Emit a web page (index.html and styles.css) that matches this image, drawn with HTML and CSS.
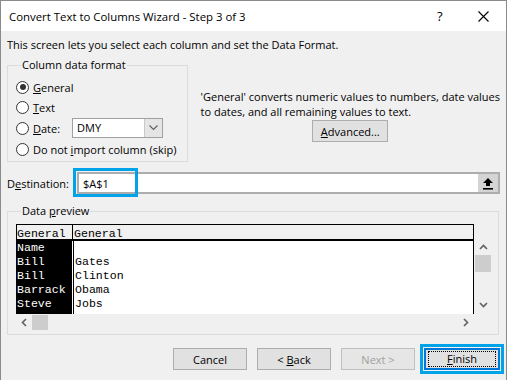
FILE: index.html
```html
<!DOCTYPE html>
<html lang="en">
<head>
  <meta charset="UTF-8">
  <title>Convert Text to Columns Wizard - Step 3 of 3</title>
  <link rel="stylesheet" href="styles.css">
</head>
<body>

<div class="window">
  <!-- Title bar -->
  <div class="titlebar">
    <span class="title">Convert Text to Columns Wizard - Step 3 of 3</span>
    <span class="help">?</span>
    <span class="close">
      <svg width="11" height="11" viewBox="0 0 11 11"><path d="M0.5 0.5 L10.5 10.5 M10.5 0.5 L0.5 10.5" stroke="#000" stroke-width="1.1" fill="none"/></svg>
    </span>
  </div>

  <div class="content">
    <p class="intro">This screen lets you select each column and set the Data Format.</p>

    <div class="format-row">
      <fieldset class="group format">
        <legend>Column data format</legend>
        <div class="radio checked"><span class="dot"></span><span><u>G</u>eneral</span></div>
        <div class="radio"><span class="dot"></span><span><u>T</u>ext</span></div>
        <div class="radio date">
          <span class="dot"></span><span class="date-label"><u>D</u>ate:</span>
          <div class="combo">
            <span class="combo-value">DMY</span>
            <span class="combo-btn">
              <svg width="9" height="6" viewBox="0 0 9 6"><path d="M0.5 0.5 L4.5 4.5 L8.5 0.5" stroke="#606060" stroke-width="1.2" fill="none"/></svg>
            </span>
          </div>
        </div>
        <div class="radio skip"><span class="dot"></span><span>Do not <u>i</u>mport column (skip)</span></div>
      </fieldset>

      <div class="format-help">
        <p>'General' converts numeric values to numbers, date values<br>to dates, and all remaining values to text.</p>
        <button class="btn advanced"><u>A</u>dvanced...</button>
      </div>
    </div>

    <div class="dest-row">
      <span class="dest-label">D<u>e</u>stination:</span>
      <div class="dest-input">
        <span class="dest-value">$A$1</span>
        <span class="pick-btn">
          <svg width="12" height="13" viewBox="0 0 12 13"><path d="M6 1 L11 6 L8 6 L8 9 L4 9 L4 6 L1 6 Z" fill="#000"/><rect x="1" y="11" width="10" height="1.6" fill="#000"/></svg>
        </span>
        <span class="mark mark-dest"></span>
      </div>
    </div>

    <fieldset class="group preview">
      <legend>Data <u>p</u>review</legend>
      <div class="preview-main">
        <div class="grid">
          <div class="grid-head">
            <span class="c1">General</span><span class="c2">General</span>
          </div>
          <div class="grid-body">
            <div class="grid-row"><span class="c1">Name</span><span class="c2"></span></div>
            <div class="grid-row"><span class="c1">Bill</span><span class="c2">Gates</span></div>
            <div class="grid-row"><span class="c1">Bill</span><span class="c2">Clinton</span></div>
            <div class="grid-row"><span class="c1">Barrack</span><span class="c2">Obama</span></div>
            <div class="grid-row"><span class="c1">Steve</span><span class="c2">Jobs</span></div>
          </div>
        </div>
        <div class="vscroll">
          <svg class="arr" width="9" height="6" viewBox="0 0 9 6"><path d="M1 5 L4.5 1.5 L8 5" stroke="#606060" stroke-width="1.6" fill="none"/></svg>
          <span class="vthumb"></span>
          <span class="vspace"></span>
          <svg class="arr" width="9" height="6" viewBox="0 0 9 6"><path d="M1 1 L4.5 4.5 L8 1" stroke="#606060" stroke-width="1.6" fill="none"/></svg>
        </div>
      </div>
      <div class="hscroll">
        <svg class="arr" width="6" height="9" viewBox="0 0 6 9"><path d="M5 1 L1.5 4.5 L5 8" stroke="#606060" stroke-width="1.6" fill="none"/></svg>
        <span class="hthumb"></span>
        <span class="hspace"></span>
        <svg class="arr" width="6" height="9" viewBox="0 0 6 9"><path d="M1 1 L4.5 4.5 L1 8" stroke="#606060" stroke-width="1.6" fill="none"/></svg>
      </div>
    </fieldset>

    <div class="buttons">
      <button class="btn">Cancel</button>
      <button class="btn">&lt; <u>B</u>ack</button>
      <button class="btn disabled">Next &gt;</button>
      <div class="finish-wrap">
        <button class="btn finish"><span class="focus"><u>F</u>inish</span></button>
        <span class="mark mark-finish"></span>
      </div>
    </div>
  </div>
</div>

</body>
</html>
```

FILE: styles.css
```css
body, html {
  margin: 0;
  padding: 0;
  font-family: "Open Sans", "Noto Sans", sans-serif;
  font-size: 11px;
  color: #000;
  background: #f0f0f0;
}
.window {
  width: 507px;
  height: 380px;
  box-sizing: border-box;
  border: 1px solid #8a8a8a;
  border-bottom: none;
  background: #f0f0f0;
  overflow: hidden;
}

/* Title bar */
.titlebar {
  height: 30px;
  background: #fff;
  display: flex;
  align-items: center;
  padding-left: 8px;
}
.titlebar .title {
  font-size: 11.4px;
  flex-grow: 1;
}
.titlebar .help {
  font-size: 13px;
  width: 41px;
}
.titlebar .close {
  width: 28px;
  display: flex;
}

.content {
  padding: 0 6px;
}
.intro {
  margin: 6px 0 4px;
  line-height: 16px;
}

/* Group boxes */
.group {
  margin: 0;
  min-width: 0;
  border: 1px solid #dcdcdc;
  box-sizing: border-box;
}
.group legend {
  padding: 0 1px;
  margin-left: 5px;
  line-height: 16px;
}

.format-row {
  display: flex;
}
.format {
  width: 182px;
  padding: 4px 0 1px 8px;
}
.radio {
  display: flex;
  align-items: center;
  height: 20px;
  white-space: nowrap;
}
.radio.date {
  height: 22px;
}
.radio.skip {
  height: 21px;
}
.dot {
  flex-shrink: 0;
  width: 11px;
  height: 11px;
  border: 1px solid #333;
  border-radius: 50%;
  background: #fff;
  margin-right: 4px;
  display: flex;
  align-items: center;
  justify-content: center;
}
.radio.checked .dot::after {
  content: "";
  width: 6px;
  height: 6px;
  border-radius: 50%;
  background: #333;
}
.date-label {
  width: 39px;
}
.combo {
  width: 91px;
  height: 20px;
  box-sizing: border-box;
  border: 1px solid #a0a0a0;
  background: #fff;
  display: flex;
}
.combo-value {
  flex-grow: 1;
  padding-left: 4px;
  line-height: 18px;
}
.combo-btn {
  width: 17px;
  background: #e5e5e5;
  border-left: 1px solid #c8c8c8;
  display: flex;
  align-items: center;
  justify-content: center;
}

.format-help {
  flex-grow: 1;
  padding-left: 13px;
  text-align: center;
  white-space: nowrap;
}
.format-help p {
  margin: 32px 0 1px;
  line-height: 15px;
  text-align: left;
}

/* Buttons */
.btn {
  font-family: inherit;
  font-size: 11px;
  height: 22px;
  width: 74px;
  padding: 0;
  background: #e1e1e1;
  border: 1px solid #adadad;
  color: #000;
  cursor: pointer;
}
.btn.advanced {
  width: 76px;
}
.btn.disabled {
  color: #a0a0a0;
  background: #e6e6e6;
  border-color: #bfbfbf;
}

/* Destination */
.dest-row {
  display: flex;
  align-items: center;
  margin-top: 10px;
}
.dest-label {
  width: 70px;
}
.dest-input {
  position: relative;
  flex-grow: 1;
  height: 22px;
  box-sizing: border-box;
  border: 2px solid #adadad;
  background: #fff;
  display: flex;
  align-items: center;
}
.dest-value {
  flex-grow: 1;
  padding-left: 4px;
}
.pick-btn {
  width: 20px;
  height: 18px;
  background: #d4d4d4;
  display: flex;
  align-items: center;
  justify-content: center;
}
.mark {
  position: absolute;
  border: 3px solid #00a2e8;
}
.mark-dest {
  left: -6px;
  top: -6px;
  width: 59px;
  height: 23px;
}

/* Data preview */
.preview {
  margin-top: 9px;
  width: 492px;
  padding: 5px 0 4px 8px;
}
.preview-main {
  display: flex;
}
.grid {
  width: 458px;
  font-family: "Liberation Mono", monospace;
  font-size: 11.6px;
}
.grid-head {
  display: flex;
  height: 14px;
  line-height: 17px;
  border: 1px solid #000;
  border-bottom: 2px solid #000;
  background: #f0f0f0;
  overflow: hidden;
}
.grid-head .c1 {
  width: 55px;
  border-right: 1px solid #000;
}
.grid-head .c2 {
  padding-left: 1px;
}
.grid-body {
  height: 73px;
  background: #fff;
  border-right: 1px solid #000;
  display: flex;
  flex-direction: column;
}
.grid-row {
  display: flex;
  height: 14px;
  line-height: 14px;
}
.grid-row .c1 {
  width: 55px;
  background: #000;
  color: #fff;
  padding-left: 1px;
}
.grid-row .c2 {
  margin-left: 1px;
  border-left: 1px solid #000;
  padding-left: 1px;
}
.grid-row:last-child {
  height: 17px;
}
.vscroll {
  margin-top: 15px;
  margin-left: 1px;
  width: 16px;
  height: 75px;
  display: flex;
  flex-direction: column;
  align-items: center;
}
.vscroll .arr:first-child {
  margin-top: 5px;
}
.vthumb {
  width: 16px;
  height: 17px;
  background: #cdcdcd;
  margin-top: 5px;
}
.vspace {
  flex-grow: 1;
}
.vscroll .arr:last-child {
  margin-bottom: 6px;
}
.hscroll {
  display: flex;
  align-items: center;
  height: 16px;
  width: 458px;
}
.hscroll .arr:first-child {
  margin-left: 5px;
}
.hthumb {
  width: 16px;
  height: 15px;
  background: #cdcdcd;
  margin-left: 5px;
}
.hspace {
  flex-grow: 1;
}
.hscroll .arr:last-child {
  margin-right: 5px;
}

.buttons {
  display: flex;
  justify-content: flex-end;
  gap: 10px;
  margin-top: 13px;
}
.finish-wrap {
  position: relative;
  margin-left: -1px;
  display: flex;
}
.btn.finish {
  width: 76px;
  border: 2px solid #0078d7;
  display: flex;
  align-items: center;
  justify-content: center;
}
.btn.finish .focus {
  display: block;
  width: 66px;
  height: 14px;
  line-height: 14px;
  border: 1px dotted #000;
}
.mark-finish {
  left: -4px;
  top: -4px;
  width: 78px;
  height: 24px;
}
```
